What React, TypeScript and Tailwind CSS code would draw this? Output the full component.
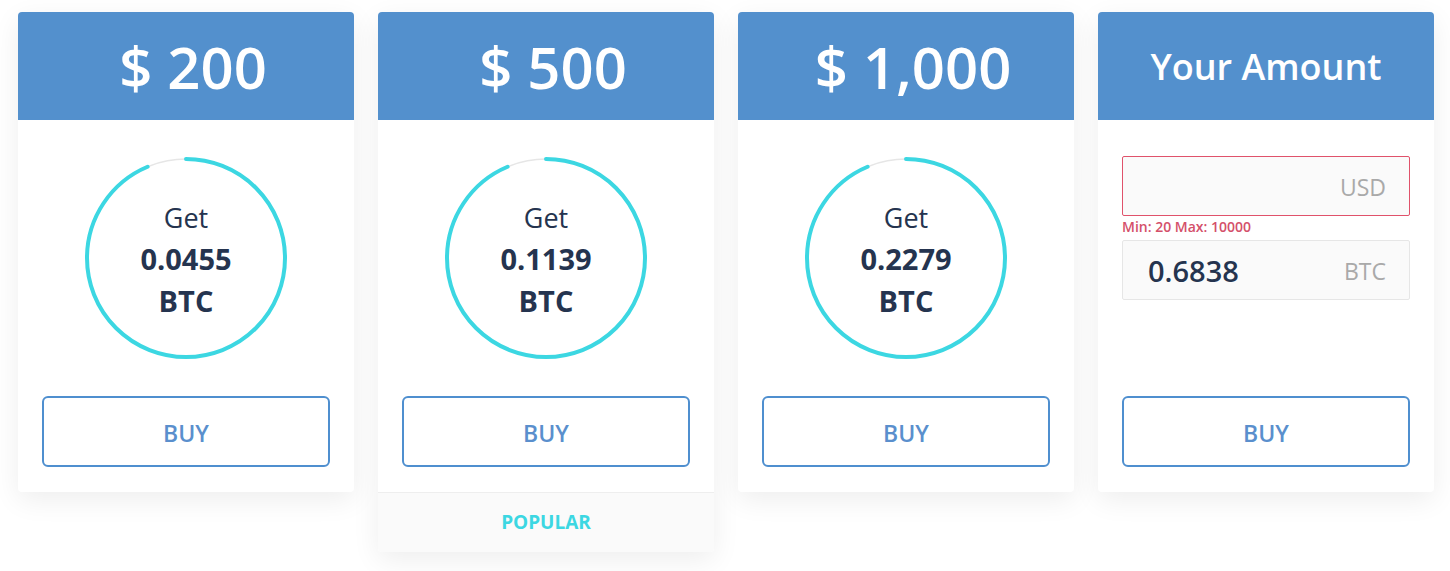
import React from "react";

type Plan = { usd: string; btc: string; popular?: boolean };

const plans: Plan[] = [
  { usd: "$ 200", btc: "0.0455" },
  { usd: "$ 500", btc: "0.1139", popular: true },
  { usd: "$ 1,000", btc: "0.2279" },
];

const font = { fontFamily: '"Open Sans", "Noto Sans", sans-serif' };

function Ring() {
  // progress ring, small gap at top left
  const r = 99;
  const c = 2 * Math.PI * r;
  const pct = 0.935;
  return (
    <svg width="204" height="204" viewBox="0 0 204 204" className="absolute inset-0">
      <circle cx="102" cy="102" r={r} fill="none" stroke="#e6e6e6" strokeWidth="1.5" />
      <circle
        cx="102"
        cy="102"
        r={r}
        fill="none"
        stroke="#3cd7e2"
        strokeWidth="4"
        strokeLinecap="round"
        strokeDasharray={`${c * pct} ${c}`}
        transform="rotate(-90 102 102)"
      />
    </svg>
  );
}

function BuyButton() {
  return (
    <button className="flex h-[71px] w-full items-center justify-center rounded-[6px] border-2 border-[#4f8fcf] bg-white pt-[4px] text-[23px] font-semibold text-[#5a8fcd]">
      BUY
    </button>
  );
}

function Card({ plan }: { plan: Plan }) {
  return (
    <div className="flex w-[336px] shrink-0 flex-col self-start overflow-hidden rounded-[4px] bg-white shadow-[0_8px_28px_rgba(0,0,0,0.07)]">
      <div className="flex h-[108px] items-center justify-center bg-[#5390cd] pl-[14px] text-[58px] font-semibold text-white">
        {plan.usd}
      </div>
      <div className="flex flex-col items-center px-6 pt-[36px] pb-[25px]">
        <div className="relative flex h-[204px] w-[204px] flex-col items-center justify-center pt-[4px] text-[#25344f]">
          <Ring />
          <span className="text-[27px] leading-[40px]">Get</span>
          <span className="text-[29px] font-bold leading-[42px]">{plan.btc}</span>
          <span className="text-[29px] font-bold leading-[42px]">BTC</span>
        </div>
        <div className="mt-[36px] w-full">
          <BuyButton />
        </div>
      </div>
      {plan.popular ? (
        <div className="flex h-[60px] items-center justify-center border-t border-[#eeeeee] bg-[#fafafa] text-[19px] font-bold text-[#3cd7e2]">
          POPULAR
        </div>
      ) : null}
    </div>
  );
}

function CustomCard() {
  return (
    <div className="flex w-[336px] shrink-0 flex-col self-start overflow-hidden rounded-[4px] bg-white shadow-[0_8px_28px_rgba(0,0,0,0.07)]">
      <div className="flex h-[108px] items-center justify-center bg-[#5390cd] pt-[2px] text-[36px] font-semibold text-white">
        Your Amount
      </div>
      <div className="flex h-[372px] flex-col px-6 pt-[36px] pb-[25px]">
        <div className="flex h-[60px] items-center justify-end rounded-[2px] border border-[#e0526b] bg-[#fafafa] pt-[3px] pr-[23px] text-[23px] text-[#a9a9a9]">
          USD
        </div>
        <div className="mt-[2px] text-[14px] font-semibold leading-[18px] text-[#d4506a]">Min: 20 Max: 10000</div>
        <div className="mt-[4px] flex h-[60px] items-center justify-between rounded-[2px] border border-[#e6e6e6] bg-[#fafafa] pt-[2px] pl-[25px] pr-[23px]">
          <span className="text-[29px] font-semibold text-[#25344f]">0.6838</span>
          <span className="text-[23px] text-[#a9a9a9]">BTC</span>
        </div>
        <div className="mt-auto w-full">
          <BuyButton />
        </div>
      </div>
    </div>
  );
}

export default function App() {
  return (
    <div className="min-h-[571px] w-full bg-white" style={font}>
      <div className="flex items-start gap-6 px-[18px] pt-[12px]">
        {plans.map((p) => (
          <Card key={p.usd} plan={p} />
        ))}
        <CustomCard />
      </div>
    </div>
  );
}
